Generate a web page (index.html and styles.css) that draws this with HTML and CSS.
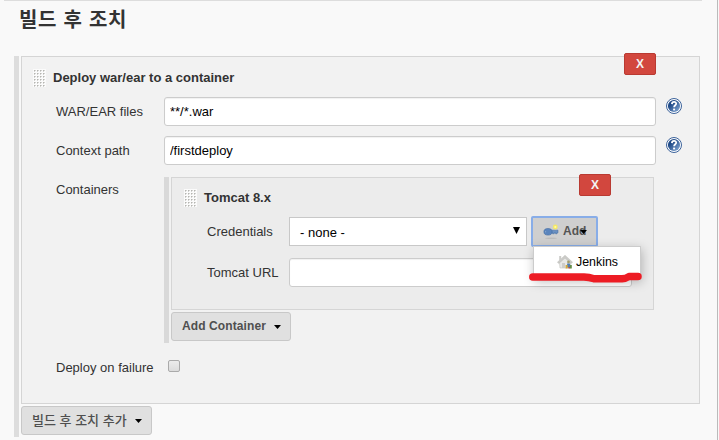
FILE: index.html
```html
<!DOCTYPE html>
<html lang="ko">
<head>
<meta charset="utf-8">
<title>Jenkins</title>
<link rel="stylesheet" href="styles.css">
</head>
<body>
<svg class="defs" width="0" height="0" aria-hidden="true">
  <defs>
    <linearGradient id="blue" x1="0" y1="0" x2="1" y2="1"><stop offset="0.3" stop-color="#204a87"/><stop offset="1" stop-color="#8fb2dc"/></linearGradient>
    <pattern id="dots" width="3" height="3" patternUnits="userSpaceOnUse"><rect width="3" height="3" fill="#fbfbfb"/><path d="M1 1h1v1H1z" fill="#b5b5b1"/><path d="M2 1h1v1H2zM1 2h1v1H1z" fill="#d4d4d2"/></pattern>
    <symbol id="grip" viewBox="0 0 13 18"><rect width="13" height="18" fill="url(#dots)"/></symbol>
    <symbol id="help" viewBox="0 0 16 16"><circle cx="8" cy="8" r="7.5" fill="#fff" stroke="#3c639b"/><circle cx="8" cy="8" r="6.1" fill="url(#blue)"/><path d="M5.9 6.1C6 3.2 10.3 3.3 10.2 5.8C10.1 7.3 8.1 7.3 8.1 9.3" fill="none" stroke="#fff" stroke-width="1.8"/><path d="M7.1 10.6h2v1.8h-2z" fill="#fff"/></symbol>
  </defs>
</svg>
<main class="page">
  <h1>빌드 후 조치</h1>
  <section class="group">
    <div class="card outer">
      <header class="head"><svg class="grip"><use href="#grip"/></svg><b>Deploy war/ear to a container</b><button class="delete">X</button></header>
      <div class="row"><label>WAR/EAR files</label><input type="text" value="**/*.war"><svg class="help"><use href="#help"/></svg></div>
      <div class="row"><label>Context path</label><input type="text" value="/firstdeploy"><svg class="help"><use href="#help"/></svg></div>
      <div class="row containers">
        <label>Containers</label>
        <div class="group nested">
          <div class="card inner">
            <header class="head"><svg class="grip"><use href="#grip"/></svg><b>Tomcat 8.x</b><button class="delete">X</button></header>
            <div class="row cred">
              <label>Credentials</label>
              <div class="select"><span>- none -</span><svg width="7" height="7"><path d="M0 0h7L3.5 7z"/></svg></div>
              <div class="add">
                <svg class="key" width="16" height="16" viewBox="0 0 16 16"><ellipse cx="8" cy="14.2" rx="6" ry=".8" fill="#bcbcbc"/><path d="M6 6.2h9v2.6h-1v1h-1.4V8.9h-1.4v.9H9.6v-.9H6z" fill="#6b91c2" stroke="#416ba3" stroke-width=".5"/><ellipse cx="5" cy="7.8" rx="4.1" ry="3.3" fill="#5b85bd" stroke="#416ba3" stroke-width=".6"/><ellipse cx="2.6" cy="7.8" rx=".6" ry=".8" fill="#8ba9cd"/><circle cx="12.3" cy="3" r="2.4" fill="#f5e864"/><circle cx="12.3" cy="3" r="1.1" fill="#fffba5"/></svg>
                <span>Add</span><svg class="caret over" width="7" height="4"><path d="M0 0h7L3.5 4z"/></svg>
                <div class="menu">
                  <svg width="16" height="16" viewBox="0 0 16 16"><path d="M2.4 7.6L8 3l5.7 5v6H3z" fill="#e8e8e6" stroke="#c2c2be" stroke-width=".6"/><path d="M.4 8.2L8 1.2l7.6 7-1.5 1.2L8 4.1 1.8 9.5z" fill="#cbcbc8" stroke="#b5b5b1" stroke-width=".4"/><path d="M2.2 2h2v3.3l-2 1.8z" fill="#cbcbc8"/><path d="M5 9h3v5H5z" fill="#cdcdca"/><circle cx="11.5" cy="8" r="1.4" fill="#a49e6b"/><path d="M10.1 9.5h3v4h-3z" fill="#4f7db5"/><path d="M8.6 11h2v3.5h-2z" fill="#d7a831"/><path d="M12.8 11h2v3.5h-2z" fill="#658e49"/><path d="M11.4 13h1.5v1.5h-1.5z" fill="#b8473b"/></svg>
                  <span>Jenkins</span>
                </div>
                <svg class="marker" width="116" height="12" viewBox="0 0 116 12"><path d="M3.8 5H55Q60 5.2 65 6.8H93Q97 6.5 100 4.5H109" fill="none" stroke="#ed1c24" stroke-width="7.5" stroke-linecap="round" stroke-linejoin="round"/></svg>
              </div>
            </div>
            <div class="row url"><label>Tomcat URL</label><input type="text"></div>
          </div>
          <button class="menu-button">Add Container<svg class="caret" width="7" height="4"><path d="M0 0h7L3.5 4z"/></svg></button>
        </div>
      </div>
      <div class="row failure"><label>Deploy on failure</label><span class="checkbox"></span></div>
    </div>
    <button class="menu-button bottom">빌드 후 조치 추가<svg class="caret" width="7" height="4"><path d="M0 0h7L3.5 4z"/></svg></button>
  </section>
</main>
</body>
</html>
```
FILE: styles.css
```css
* { box-sizing: border-box; }
html, body { height: 440px; overflow: hidden; }
body { margin: 0; background: #f9f9f9; color: #333; font: 13px/18px "Liberation Sans", "Noto Sans CJK KR", sans-serif; }
svg { display: block; flex: none; }
.defs { position: absolute; }
.page { width: 718px; height: 440px; border-right: 1px solid #bbb; }
h1 { margin: 0 15px 0 4px; height: 56px; padding: 4px 0 0 15px; border-top: 1px solid #ddd; font: bold 20px/28px "Noto Sans CJK KR", sans-serif; letter-spacing: .7px; }
.group { border-left: 5px solid #ddd; padding-left: 2px; }
.page > .group { margin-left: 14px; width: 686px; height: 381px; }
.card { border: 1px solid #d5d5d5; }
.outer { height: 348px; background: #f2f2f2; }
.inner { height: 133px; background: #ececec; }
.head { display: flex; height: 40px; padding: 12px 43px 0 11px; }
.head b { margin-left: 7px; line-height: 18px; }
.grip { width: 13px; height: 18px; }
.delete { width: 32px; height: 22px; margin: -16px 0 0 auto; padding: 0; border: 1px solid #b93a32; border-radius: 2px; background: #d2473e; color: #f3f3f3; font: bold 12px/20px "Liberation Sans", sans-serif; }
.row { display: flex; height: 39px; padding-left: 34px; }
.row label { width: 108px; flex: none; padding-top: 6px; white-space: nowrap; }
input { width: 492px; height: 29px; padding: 0 5px; border: 1px solid #ccc; border-radius: 3px; background: #fff; color: #000; font: 13px "Liberation Sans", sans-serif; box-shadow: inset 0 1px 1px rgba(0,0,0,.06); outline: 0; }
.help { width: 16px; height: 16px; margin: 1px 0 0 10px; }
.containers { height: 168px; padding-top: 2px; }
.containers > label { padding-top: 4px; }
.nested { width: 490px; height: 166px; border-left-color: #d9d9d9; }
.inner .head { height: 39px; padding: 11px 42px 0 12px; }
.inner .delete { margin-top: -15px; }
.inner .row { padding-left: 35px; }
.inner .row label { width: 82px; }
.cred { height: 41px; }
.select { display: flex; align-items: center; justify-content: space-between; width: 238px; height: 29px; padding: 2px 6px 0 10px; border: 1px solid #c8c8c8; background: #fff; color: #000; }
.select svg { margin-top: -4px; }
.add { position: relative; display: flex; align-items: center; width: 67px; height: 31px; margin: -1px 0 0 4px; padding: 0 0 2px 10px; border: 2px solid #88ade8; border-radius: 2px; background: #cfcfcf; color: #555; font-weight: bold; font-size: 12px; }
.key { margin-top: 2px; }
.add > span { margin-left: 4px; }
.over { position: absolute; left: 47px; top: 12px; }
.menu { position: absolute; z-index: 1; left: 0; top: 28px; display: flex; align-items: center; width: 108px; height: 33px; padding: 0 0 1px 23px; border: 1px solid #ccc; background: #fff; color: #000; font-weight: normal; font-size: 12.4px; box-shadow: 1px 3px 10px rgba(0,0,0,.25); }
.menu span { margin-left: 3px; }
.marker { position: absolute; z-index: 2; left: -4px; top: 54px; }
.url input { width: 343px; }
.menu-button { display: flex; align-items: center; width: 120px; height: 29px; margin-top: 2px; padding: 0 9px 1px 10px; justify-content: space-between; border: 1px solid #c8c8c8; border-radius: 3px; background: #e0e0e0; color: #4f4f4f; font: bold 12px "Liberation Sans", sans-serif; letter-spacing: .1px; white-space: nowrap; }
.menu-button .caret { margin-top: 1px; }
.bottom { width: 131px; padding-bottom: 3px; letter-spacing: 0; font: 500 13px "Noto Sans CJK KR", sans-serif; }
.bottom .caret { margin-top: 4px; }
.failure { padding-top: 8px; }
.failure label { padding-top: 8px; }
.checkbox { width: 12px; height: 12px; margin: 9px 0 0 4px; border: 1px solid #aaa; border-radius: 2px; background: linear-gradient(#ececec, #dcdcdc); }
```
